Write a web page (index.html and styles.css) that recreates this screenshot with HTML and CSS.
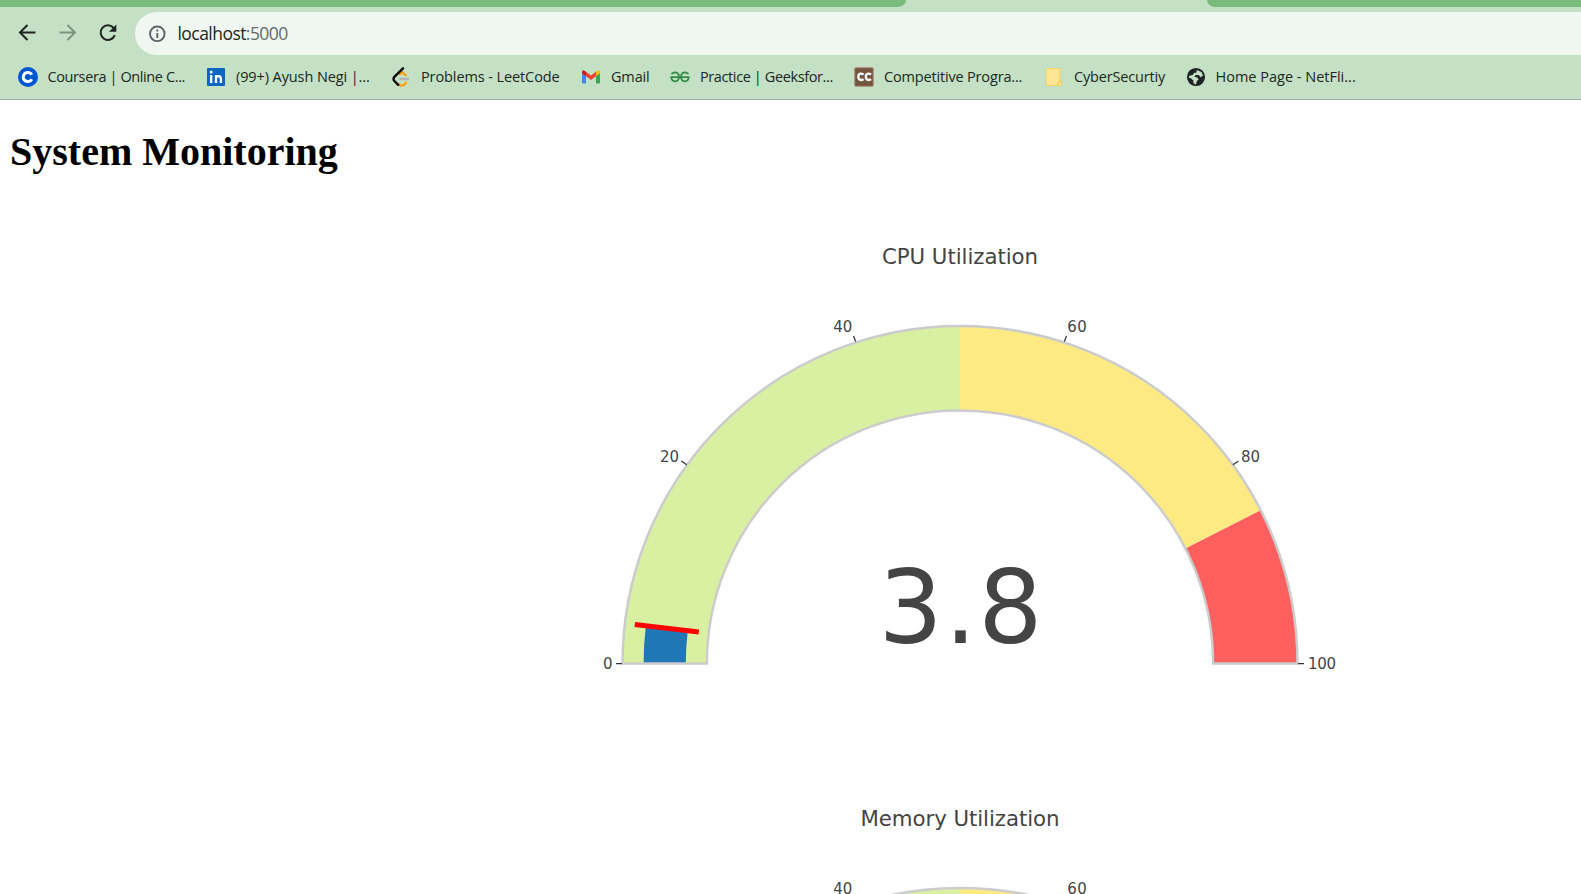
FILE: index.html
```html
<!DOCTYPE html>
<html lang="en">
<head>
<meta charset="utf-8">
<title>System Monitoring</title>
<link rel="stylesheet" href="styles.css">
</head>
<body>
<header class="browser">
  <div class="tabs"><div class="tab tab-left"></div><div class="tab tab-right"></div></div>
  <div class="toolbar">
    <svg class="nav" width="134" height="43" viewBox="0.5 0 134 43" fill="none" stroke="#1f2422" stroke-width="2">
      <path d="M35.5 20.5H20.5M27.5 13L20 20.5L27.5 28"/>
      <path stroke="#80947f" d="M59.5 20.5H74.5M67.5 13L75 20.5L67.5 28"/>
      <path d="M113.8 16.2A7.3 7.3 0 1 0 114.8 23.2"/>
      <path fill="#1f2422" stroke="none" d="M116.3 12.5V19.8H109Z"/>
    </svg>
    <div class="address">
      <svg width="18" height="18" viewBox="0 0 18 18" fill="none" stroke="#5f6368" stroke-width="1.9"><circle cx="9.3" cy="8.8" r="7.3"/><path d="M9.3 8V13M9.3 4.6V6.4"/></svg>
      <span class="url">localhost<span class="port">:5000</span></span>
    </div>
  </div>
  <nav class="bookmarks">
    <div class="bookmark">
      <svg width="20" height="20" viewBox="0 0 20 20"><circle cx="10" cy="10" r="10" fill="#0056d2"/><path d="M13.8 7.7A4.6 4.6 0 1 0 13.8 12.3" fill="none" stroke="#fff" stroke-width="3"/></svg>
      <span class="tight">Coursera | Online C...</span></div>
    <div class="bookmark">
      <svg width="20" height="20" viewBox="0 0 20 20"><rect x="1" y="1" width="18" height="18" rx="1" fill="#0a66c2"/><path d="M5.2 8V16M10 8V16M10 16V11.5Q10 9.2 12.5 9.2Q14.9 9.2 14.9 12V16" fill="none" stroke="#fff" stroke-width="2.3"/><circle cx="5.2" cy="5" r="1.5" fill="#fff"/></svg>
      <span class="snug">(99+) Ayush Negi |...</span></div>
    <div class="bookmark">
      <svg width="20" height="20" viewBox="0 0 20 20" fill="none" stroke-width="2.4" stroke-linecap="round" stroke-linejoin="round"><path stroke="#b3b3b3" d="M9.5 12H17"/><path stroke="#ffa116" d="M9 7L11.3 5.2L14.7 8.3M8 17.3Q11.5 20.5 15 15.8"/><path stroke="#080808" d="M12 1.3L3.4 9.8Q1.7 12 3.4 14L7.2 17.8"/></svg>
      <span class="snug">Problems - LeetCode</span></div>
    <div class="bookmark">
      <svg width="20" height="20" viewBox="0 0 20 20"><path fill="#4285f4" d="M1 6L5 9V16.5H2Q1 16.5 1 15.5Z"/><path fill="#34a853" d="M15 9L19 6V15.5Q19 16.5 18 16.5H15Z"/><path fill="#ea4335" d="M5 4.7L10 8.4L15 4.7V9.3L10 13L5 9.3Z"/><path fill="#c5221f" d="M1 6V5Q1.2 2.3 3.7 3.7L5 4.7V9.3L1 6.4Z"/><path fill="#fbbc04" d="M15 9.3V4.7L16.3 3.7Q18.8 2.3 19 5V6.4Z"/></svg>
      <span class="medium">Gmail</span></div>
    <div class="bookmark">
      <svg width="20" height="20" viewBox="0 0 20 20" fill="none" stroke="#2f8d46" stroke-width="1.8"><path d="M1.5 7.2Q3 5.4 5.3 5.4Q8.9 5.7 9 10Q8.8 14 5.2 14.3Q1.4 14 1.3 10.2H18.7Q18.6 14 14.8 14.3Q11.2 14 11 10Q11.1 5.7 14.7 5.4Q17 5.4 18.5 7.2"/></svg>
      <span class="tight">Practice | Geeksfor...</span></div>
    <div class="bookmark">
      <svg width="20" height="20" viewBox="0 0 20 20"><rect x=".8" y=".8" width="18.4" height="18.4" rx="1" fill="#75543f" stroke="#a5826d" stroke-width="1"/><path d="M9.5 7.6Q8.4 6.6 6.6 6.7Q4.3 7 4.3 9.8Q4.4 12.7 6.9 13Q8.5 13 9.5 12.1M17 7.6Q15.9 6.6 14.1 6.7Q11.8 7 11.8 9.8Q11.9 12.7 14.4 13Q16 13 17 12.1" fill="none" stroke="#fff" stroke-width="2.3"/></svg>
      <span class="medium">Competitive Progra...</span></div>
    <div class="bookmark">
      <svg width="20" height="20" viewBox="0 0 20 20"><path d="M3 1.5H16V14.2H17.3V18.5H3Q2.2 18.5 2.2 17.7V2.3Q2.2 1.5 3 1.5Z" fill="#ffe694" stroke="#f4d35e"/><path d="M16 13.8V15L13.8 15.4V18.4" fill="none" stroke="#efc343"/></svg>
      <span class="medium">CyberSecurtiy</span></div>
    <div class="bookmark">
      <svg width="20" height="20" viewBox="0 0 20 20"><circle cx="10" cy="10" r="9.1" fill="#202326"/><path fill="#c4e1c5" d="M10.7 3L15.5 5.1L17 8.4L14.7 10.3L12.7 8.1H9.6L8.3 9.7L11.3 10.5L12.6 12.8L10.9 13.8L10 17.5L7.4 16.3V13.5L4.5 11.1H3V8.9L6.6 8.1L8.3 5.8H10.5Z"/></svg>
      <span>Home Page - NetFli...</span></div>
  </nav>
</header>
<main class="page">
  <h1 class="heading">System Monitoring</h1>
  <section class="charts">
    <svg class="chart" width="1581" height="562" viewBox="0 200 1581 562">
      <text class="title" x="882" y="264" textLength="156">CPU Utilization</text>
      <g id="dial">
        <path fill="#d9f0a3" d="M622.5 663.5A337.5 337.5 0 0 1 960 326V410.4A253.1 253.1 0 0 0 706.9 663.5Z"/>
        <path fill="#feea83" d="M960 326A337.5 337.5 0 0 1 1260.72 510.28L1185.52 548.6A253.1 253.1 0 0 0 960 410.4Z"/>
        <path fill="#ff5f5f" d="M1260.72 510.28A337.5 337.5 0 0 1 1297.5 663.5H1213.1A253.1 253.1 0 0 0 1185.52 548.6Z"/>
      </g>
      <path fill="#1f77b4" d="M643.6 663.5A316.4 316.4 0 0 1 645.85 625.82L687.76 630.85A274.2 274.2 0 0 0 685.8 663.5Z"/>
      <g id="rim">
        <path class="outline" d="M622.5 663.5A337.5 337.5 0 0 1 1297.5 663.5H1213.1A253.1 253.1 0 0 0 706.9 663.5Z"/>
        <path class="ticks" d="M616 663.5H622M686.7 464.7L681.3 461M855.7 341.5L853.5 336M1064.3 341.5L1066.5 336M1233 464.7L1238.5 461M1298 663.5H1304"/>
        <g class="labels">
          <text x="603" y="669">0</text><text x="660" y="462" textLength="19">20</text><text x="833.3" y="332" textLength="19">40</text><text x="1067.3" y="332" textLength="19.5">60</text><text x="1241" y="462" textLength="19">80</text><text x="1308" y="669" textLength="28">100</text>
        </g>
      </g>
      <path stroke="#f00" stroke-width="5" d="M634.8 624.4L698.8 632.1"/>
      <text class="value" x="878.5" y="642.5" textLength="164">3.8</text>
    </svg>
    <svg class="chart" width="1581" height="133" viewBox="0 200 1581 133">
      <text class="title" x="860.5" y="263.5" textLength="199">Memory Utilization</text>
      <use href="#dial"/><use href="#rim"/>
    </svg>
  </section>
</main>
</body>
</html>
```
FILE: styles.css
```css
html, body { height: 100%; }
body { margin: 0; overflow: hidden; background: #fff; }
svg { display: block; flex: none; }
.browser { box-sizing: border-box; height: 100px; background: #c4e1c5; border-bottom: 1px solid #9cb49d; font-family: "Open Sans", "Noto Sans", sans-serif; color: #202623; }
.tabs { display: flex; justify-content: space-between; height: 12px; }
.tab { height: 7px; background: #79bb7c; }
.tab-left { width: 906px; border-bottom-right-radius: 11px 9px; }
.tab-right { width: 374px; border-bottom-left-radius: 11px 9px; }
.toolbar { display: flex; height: 43px; }
.nav { width: 135px; }
.address { flex: 1; display: flex; align-items: center; gap: 11.5px; padding-left: 13px; background: #f0f7f1; border-radius: 22px 0 0 22px; }
.url { font-size: 17.5px; letter-spacing: -.55px; line-height: 24px; margin-top: -1px; }
.port { color: #646b67; }
.bookmarks { display: grid; grid-template-columns: 188.5px 185px 190px 89px 184px 190px 141.5px 1fr; padding-left: 17.5px; height: 44px; align-items: center; }
.bookmark { display: flex; align-items: center; gap: 10px; font-size: 14.5px; line-height: 20px; white-space: nowrap; }
.tight { letter-spacing: -.39px; }
.medium { letter-spacing: -.17px; }
.snug { letter-spacing: -.1px; }
.page { height: 794px; overflow: hidden; }
.heading { margin: 0; padding: 30px 0 0 10px; height: 70px; font: bold 40px/44px "Liberation Serif", serif; color: #000; }
.charts { font-family: "DejaVu Sans", sans-serif; }
.title { font-size: 21.3px; fill: #444; }
.labels { font-size: 15px; fill: #444; }
.value { font-size: 101px; fill: #444; }
.outline { fill: none; stroke: #ccc; stroke-width: 2.5; }
.ticks { fill: none; stroke: #333; stroke-width: 1.25; }
```
